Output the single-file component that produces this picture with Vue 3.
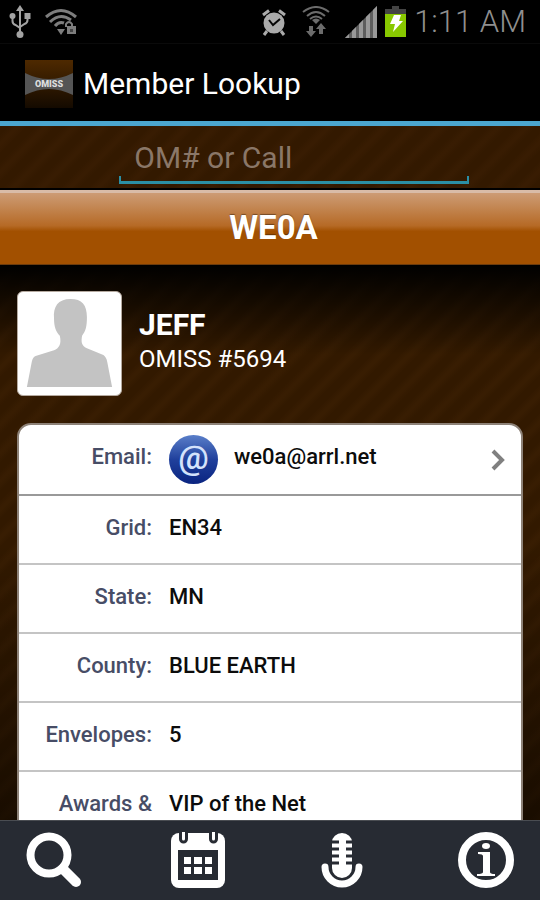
<script setup>
import { ref } from 'vue'

const query = ref('')
const member = {
  call: 'WE0A',
  name: 'JEFF',
  number: 'OMISS #5694',
  email: 'we0a@arrl.net'
}
const details = [
  { label: 'Grid:', value: 'EN34' },
  { label: 'State:', value: 'MN' },
  { label: 'County:', value: 'BLUE EARTH' },
  { label: 'Envelopes:', value: '5' },
  { label: 'Awards &', value: 'VIP of the Net' }
]
</script>

<template>
  <div class="app">
    <div class="status">
      <div class="status-group">
        <svg width="22" height="34" viewBox="0 0 22 34" fill="none" stroke="#a3a3a3" stroke-width="2">
          <path d="M11 5v24M3.500 12v4q0 3 3 4l4.500 3M18.500 12v3q0 3-3 4l-4.500 3" />
          <path d="M11 0l4 6H7z" fill="#a3a3a3" stroke="none" />
          <circle cx="3.500" cy="11" r="3" fill="#a3a3a3" stroke="none" />
          <path d="M15.500 8h6v6h-6z" fill="#a3a3a3" stroke="none" />
          <circle cx="11" cy="29.500" r="3.500" fill="#a3a3a3" stroke="none" />
        </svg>
        <svg width="32" height="28" viewBox="0 0 32 28" fill="none" stroke="#7d7d7d" stroke-width="3">
          <path d="M1 9Q16-4 31 9M5 14Q15 4 26 12M10 18Q14 13 19 15" />
          <path d="M12 21h8l-4 6z" fill="#7d7d7d" stroke="none" />
          <path d="M21 19v-3q3-4 6 0v3" stroke-width="2" />
          <path d="M22 18h9v8h-9z" fill="#7d7d7d" stroke="none" />
          <path d="M25 21h3v3h-3z" fill="#444" stroke="none" />
        </svg>
      </div>
      <div class="status-group right">
        <svg width="26" height="28" viewBox="0 0 26 28" fill="none" stroke="#aaa" stroke-width="3">
          <circle cx="13" cy="15" r="10.500" fill="#aaa" stroke="none" />
          <path d="M2 7l6-4.500M24 7l-6-4.500M6 23l-3 4M20 23l3 4" />
          <path d="M8 12l4 5 7-6" stroke="#050505" stroke-width="2" />
        </svg>
        <svg width="28" height="32" viewBox="0 0 28 32" fill="none" stroke="#6c6c6c" stroke-width="2">
          <path d="M1 6Q14-4 27 6M5 10Q14 2 23 10M8 13Q14 8 20 13" />
          <path d="M10 14q4-3 8 0l-4 4z" fill="#6c6c6c" stroke="none" />
          <path d="M9 20v6M19 28v-6" stroke-width="4" />
          <path d="M4 25h10l-5 6zM14 23h10l-5-6z" fill="#6c6c6c" stroke="none" />
        </svg>
        <svg width="32" height="32" viewBox="0 0 32 32">
          <path d="M0 32L32 0v32z" fill="#5e5e5e" />
          <path d="M0 32l4-4v4zM7 25l4-4v11H7zM14 18l4-4v18h-4zM21 11l4-4v25h-4zM28 4l4-4v32h-4z" fill="#999" />
        </svg>
        <svg width="21" height="31" viewBox="0 0 21 31">
          <path d="M7 0h7v3h7v6H0V3h7z" fill="#444" />
          <path d="M0 8h21v23H0z" fill="#88c800" />
          <path d="M9 9h7l-2 6h4L8 26l2-8H5z" fill="#fff" />
        </svg>
        <time class="clock">1:11 AM</time>
      </div>
    </div>

    <header class="title-bar">
      <svg width="48" height="48" viewBox="0 0 48 48">
        <defs>
          <linearGradient id="logo" x2="0" y2="1">
            <stop offset="0" stop-color="#4e2900" />
            <stop offset="1" stop-color="#140a00" />
          </linearGradient>
        </defs>
        <path d="M0 0h48v48H0z" fill="url(#logo)" />
        <path d="M0 13q24 12 48 0v22q-24-12-48 0z" fill="#555" />
        <text x="24" y="27" text-anchor="middle" class="logo-text">OMISS</text>
      </svg>
      <h1>Member Lookup</h1>
    </header>

    <form class="search" @submit.prevent>
      <input v-model="query" type="text" aria-label="OM# or Call" placeholder="OM# or Call">
    </form>

    <h2 class="call-bar">{{ member.call }}</h2>

    <main>
      <section class="profile">
        <div class="avatar">
          <svg viewBox="0 0 88 94">
            <path d="M45 1C32 1 27 9 28 21C28 30 30 35 34 39C36 48 33 52 28 54L9 60Q6 61 5 66L0 92H88L83 66Q82 61 79 59L62 52C56 49 56 45 57 39C61 34 62 29 62 20C62 7 57 1 45 1z" fill="#c3c3c3" />
          </svg>
        </div>
        <div class="who">
          <h3>{{ member.name }}</h3>
          <p>{{ member.number }}</p>
        </div>
      </section>

      <dl class="card">
        <div class="row email">
          <dt>Email:</dt>
          <dd>
            <a :href="'mailto:' + member.email">
              <span class="at">@</span>
              <span class="address">{{ member.email }}</span>
              <svg width="14" height="22" viewBox="0 0 14 22" fill="none" stroke="#808080" stroke-width="4">
                <path d="M2 2l9 9-9 9" />
              </svg>
            </a>
          </dd>
        </div>
        <div v-for="item in details" :key="item.label" class="row">
          <dt>{{ item.label }}</dt>
          <dd>{{ item.value }}</dd>
        </div>
      </dl>
    </main>

    <nav class="tabs">
      <button type="button" aria-label="Search">
        <svg width="56" height="56" viewBox="0 0 56 56" fill="none" stroke="#fff">
          <circle cx="23" cy="23" r="18.500" stroke-width="8" />
          <path d="M37 37l13 13" stroke-width="10" stroke-linecap="round" />
        </svg>
      </button>
      <button type="button" aria-label="Calendar">
        <svg width="56" height="56" viewBox="0 0 56 56">
          <rect x="1" y="1" width="54" height="55" rx="8" fill="#fff" />
          <path d="M9 0h9v7a4.500 4.500 0 0 1-9 0zM39 0h9v7a4.500 4.500 0 0 1-9 0z" fill="#272b33" />
          <path d="M12 0h3v7a1.500 1.500 0 0 1-3 0zM42 0h3v7a1.500 1.500 0 0 1-3 0z" fill="#fff" />
          <path d="M8 18h40v30H8z" fill="#272b33" />
          <path d="M14 25h7v7h-7zM24 25h8v7h-8zM35 25h7v7h-7zM14 35h7v7h-7zM24 35h8v7h-8zM35 35h7v7h-7z" fill="#fff" />
        </svg>
      </button>
      <button type="button" aria-label="Microphone">
        <svg width="56" height="56" viewBox="0 0 56 56">
          <path d="M18 10a10 9 0 0 1 20 0v26a10 10 0 0 1-20 0z" fill="#fff" />
          <path d="M17 10h8M17 17h8M17 24h8M17 31h8M32 10h8M32 17h8M32 24h8M32 31h8" stroke="#272b33" stroke-width="3" />
          <path d="M11 35a17 17 0 0 0 34 0" fill="none" stroke="#fff" stroke-width="7" stroke-linecap="round" />
        </svg>
      </button>
      <button type="button" aria-label="Info">
        <svg width="56" height="56" viewBox="0 0 56 56">
          <circle cx="28" cy="28" r="24" fill="none" stroke="#fff" stroke-width="8" />
          <ellipse cx="28" cy="14" rx="4" ry="3" fill="#fff" />
          <path d="M20 20h12v20q0 2 5 2v2H19v-2q6 0 6-2V24q0-2-5-2z" fill="#fff" />
        </svg>
      </button>
    </nav>
  </div>
</template>

<style>
body {
  margin: 0;
  background: #000;
}
</style>

<style scoped>
* {
  box-sizing: border-box;
  margin: 0;
  padding: 0;
}

.app {
  display: flex;
  flex-direction: column;
  height: 100vh;
  overflow: hidden;
  background: #000;
  color: #fff;
  font-family: Roboto, "Liberation Sans", sans-serif;
}

svg {
  display: block;
  flex: none;
}

.status {
  display: flex;
  justify-content: space-between;
  height: 44px;
  padding: 0 14px 0 9px;
  border-bottom: 1px solid #0a0a0a;
}

.status-group {
  display: flex;
  align-items: center;
  gap: 14px;
}

.status-group.right {
  gap: 8px;
}

.status-group.right svg:nth-child(-n + 2) {
  margin-right: 7px;
}

.clock {
  color: #8f8f8f;
  font-size: 31px;
  line-height: 44px;
  font-weight: 300;
}

.title-bar {
  display: flex;
  align-items: center;
  gap: 10px;
  height: 82px;
  padding: 3px 25px 0;
  border-bottom: 5px solid #4ba6cf;
}

.logo-text {
  fill: #ddd;
  font-size: 9px;
  font-weight: 900;
}

h1 {
  font-size: 30px;
  line-height: 40px;
  font-weight: 400;
}

.search {
  display: flex;
  justify-content: center;
  padding: 4px 0 4px 48px;
  background: repeating-linear-gradient(135deg, #331900 0 6px, #381c02 12px 14px, #331900 20px);
  border-bottom: 2px solid #000;
}

.search input {
  width: 71%;
  height: 54px;
  padding: 0 15px;
  border: 0;
  outline: 0;
  background:
    linear-gradient(#2b8fa5, #2b8fa5) left bottom / 2px 8px no-repeat,
    linear-gradient(#2b8fa5, #2b8fa5) right bottom / 2px 8px no-repeat,
    linear-gradient(#2b8fa5, #2b8fa5) left bottom / 100% 3px no-repeat;
  color: #fff;
  font-family: inherit;
  font-size: 30px;
}

.search input::placeholder {
  color: #8a7768;
}

.call-bar {
  height: 75px;
  padding-left: 7px;
  border-top: 3px solid #d9bca8;
  border-bottom: 1px solid #6b3b0d;
  background: linear-gradient(#cd9c75, #b66a26 46%, #a25000 54%, #a25000);
  text-align: center;
  font-size: 33px;
  line-height: 70px;
  text-shadow: 0 -1px 1px rgba(0, 0, 0, 0.4);
}

main {
  flex: 1;
  min-height: 0;
  overflow: hidden;
  padding: 26px 17px 0;
  background:
    linear-gradient(#000, rgba(0, 0, 0, 0) 90px),
    linear-gradient(rgba(0, 0, 0, 0) 50%, rgba(0, 0, 0, 0.5)),
    repeating-linear-gradient(135deg, #321900 0 6px, #381d02 12px 14px, #321900 20px);
}

.profile {
  display: flex;
  align-items: center;
  gap: 17px;
  margin-bottom: 27px;
}

.avatar {
  width: 105px;
  height: 105px;
  padding: 6px 8px;
  border: 1px solid #b5aaa0;
  border-radius: 6px;
  background: #fff;
}

.avatar svg {
  width: 100%;
  height: 100%;
}

.who {
  padding-bottom: 6px;
}

h3 {
  font-size: 30px;
  line-height: 36px;
}

.profile p {
  font-size: 24px;
  line-height: 32px;
}

.card {
  border: 2px solid #8d8278;
  border-radius: 14px;
  background: #fff;
  color: #0c0c0c;
  font-size: 22px;
  line-height: 32px;
  font-weight: 500;
}

.row {
  display: flex;
  gap: 17px;
  height: 69px;
  padding-top: 16px;
  border-bottom: 2px solid #c4c4c4;
}

.row.email {
  height: 71px;
  border-bottom-color: #999;
}

dt {
  width: 133px;
  color: #474d66;
  text-align: right;
}

dd {
  flex: 1;
}

dd a {
  display: flex;
  gap: 16px;
  color: inherit;
  text-decoration: none;
}

dd a svg {
  margin: 8px 16px 0 auto;
}

.at {
  width: 49px;
  height: 49px;
  margin-top: -6px;
  border-radius: 50%;
  background: linear-gradient(#5a7fc9, #20409c 50%, #0a2480);
  color: #d4e2fb;
  text-align: center;
  font-size: 34px;
  line-height: 44px;
}

.tabs {
  display: flex;
  justify-content: space-between;
  height: 80px;
  padding: 11px 26px 0;
  border-top: 1px solid #4a4d52;
  background: #272b33;
}

.tabs button {
  width: 56px;
  height: 56px;
  border: 0;
  background: none;
  cursor: pointer;
}
</style>
